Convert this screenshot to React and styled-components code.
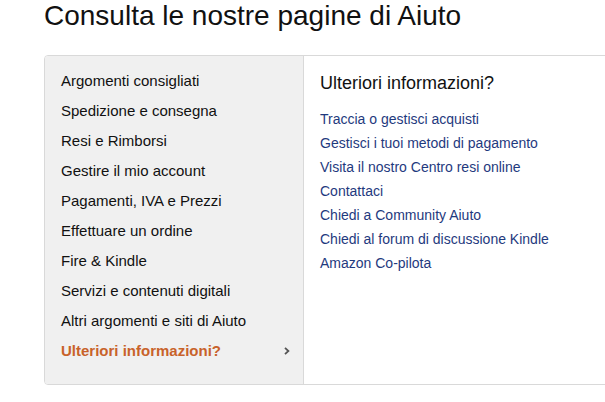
import styled, { createGlobalStyle } from "styled-components";

const GlobalStyle = createGlobalStyle`
  html, body {
    margin: 0;
    padding: 0;
    overflow: hidden;
    background: #fff;
  }
  body {
    font-family: Arial, "Liberation Sans", Helvetica, sans-serif;
    color: #111;
  }
`;

const Page = styled.div`
  padding-left: 44px;
`;

const PageTitle = styled.h1`
  margin: 0;
  font-size: 28px;
  line-height: 31px;
  font-weight: 400;
  color: #111;
`;

const HelpBox = styled.div`
  margin-top: 24px;
  width: 640px;
  height: 330px;
  box-sizing: border-box;
  display: flex;
  border: 1px solid #d9d9d9;
  border-radius: 4px;
  overflow: hidden;
`;

const TopicList = styled.ul`
  width: 259px;
  box-sizing: border-box;
  margin: 0;
  padding: 9px 0 0;
  list-style: none;
  background: #f0f0f0;
  border-right: 1px solid #d9d9d9;
`;

const Topic = styled.li`
  height: 30px;
  display: flex;
  align-items: center;
  justify-content: space-between;
  padding: 0 13px 0 16px;
  font-size: 15px;
  color: ${(p) => (p.$active ? "#c8622a" : "#111")};
  font-weight: ${(p) => (p.$active ? 700 : 400)};
  cursor: pointer;
`;

const Chevron = styled.svg`
  width: 6px;
  height: 8px;
  margin-top: 2px;
`;

const InfoPanel = styled.div`
  flex: 1;
  padding: 15px 16px 0;
`;

const InfoTitle = styled.h2`
  margin: 0 0 12px;
  font-size: 18px;
  line-height: 24px;
  font-weight: 400;
  color: #111;
`;

const LinkList = styled.div`
  display: flex;
  flex-direction: column;
`;

const HelpLink = styled.a`
  font-size: 14px;
  line-height: 24px;
  color: #1f3a7e;
  text-decoration: none;
`;

const topics = [
  "Argomenti consigliati",
  "Spedizione e consegna",
  "Resi e Rimborsi",
  "Gestire il mio account",
  "Pagamenti, IVA e Prezzi",
  "Effettuare un ordine",
  "Fire & Kindle",
  "Servizi e contenuti digitali",
  "Altri argomenti e siti di Aiuto",
  "Ulteriori informazioni?",
];

const links = [
  "Traccia o gestisci acquisti",
  "Gestisci i tuoi metodi di pagamento",
  "Visita il nostro Centro resi online",
  "Contattaci",
  "Chiedi a Community Aiuto",
  "Chiedi al forum di discussione Kindle",
  "Amazon Co-pilota",
];

export default function App() {
  const active = topics.length - 1;
  return (
    <>
      <GlobalStyle />
      <Page>
        <PageTitle>Consulta le nostre pagine di Aiuto</PageTitle>
        <HelpBox>
          <TopicList>
            {topics.map((t, i) => (
              <Topic key={t} $active={i === active}>
                <span>{t}</span>
                {i === active && (
                  <Chevron viewBox="0 0 6 8">
                    <path
                      d="M1 0.8 L4.4 4 L1 7.2"
                      fill="none"
                      stroke="#555"
                      strokeWidth="1.8"
                    />
                  </Chevron>
                )}
              </Topic>
            ))}
          </TopicList>
          <InfoPanel>
            <InfoTitle>Ulteriori informazioni?</InfoTitle>
            <LinkList>
              {links.map((l) => (
                <HelpLink key={l} href="#">
                  {l}
                </HelpLink>
              ))}
            </LinkList>
          </InfoPanel>
        </HelpBox>
      </Page>
    </>
  );
}
